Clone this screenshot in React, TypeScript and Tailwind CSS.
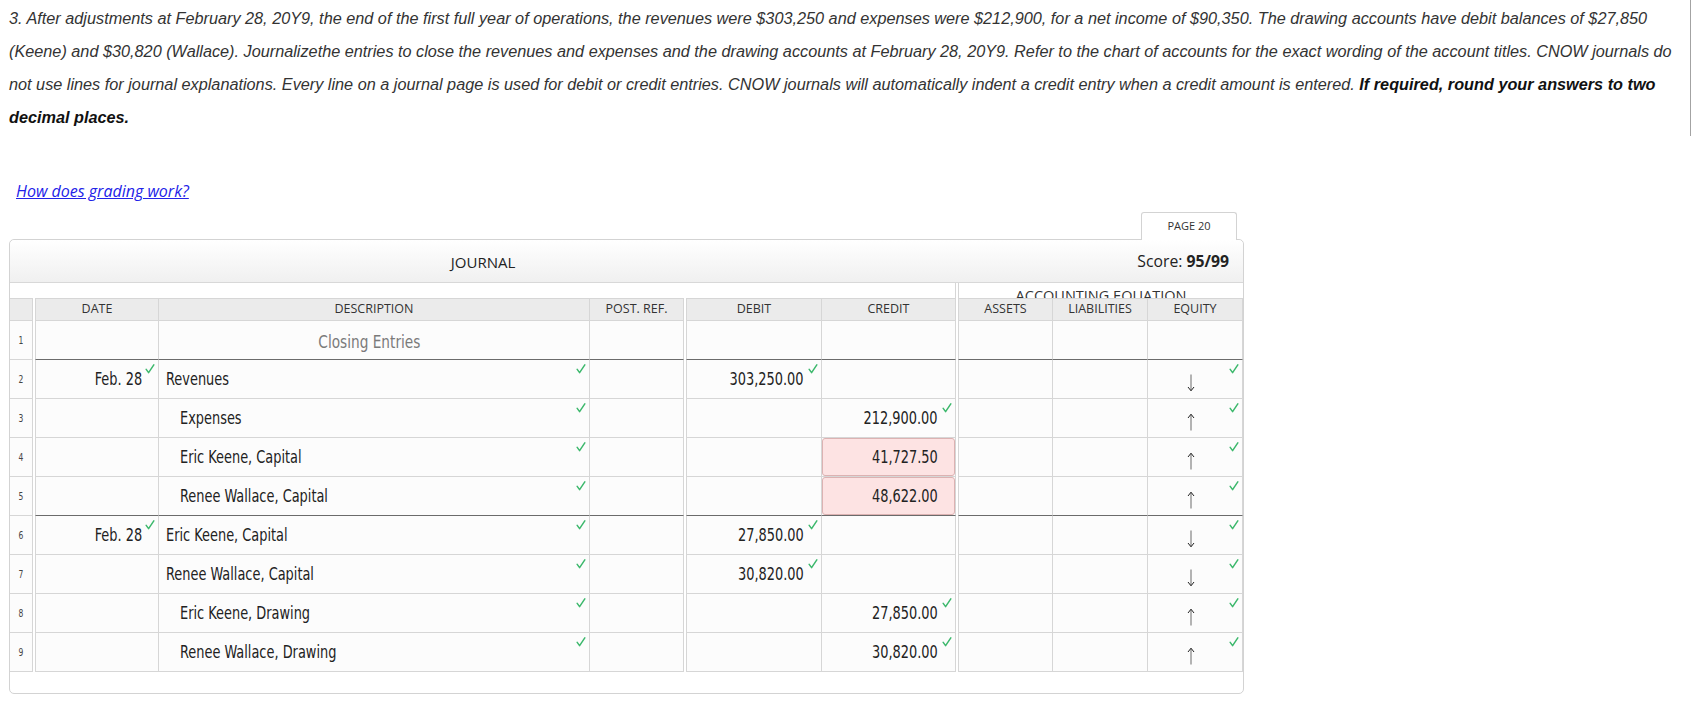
import React from 'react';

type Row = {
  n: number;
  date?: string;
  desc: string;
  placeholder?: boolean;
  indent?: boolean;
  debit?: string;
  credit?: string;
  wrong?: boolean;
  eq?: 'up' | 'down';
  sep?: boolean;
};

const rows: Row[] = [
  { n: 1, desc: 'Closing Entries', placeholder: true, sep: true },
  { n: 2, date: 'Feb. 28', desc: 'Revenues', debit: '303,250.00', eq: 'down' },
  { n: 3, desc: 'Expenses', indent: true, credit: '212,900.00', eq: 'up' },
  { n: 4, desc: 'Eric Keene, Capital', indent: true, credit: '41,727.50', wrong: true, eq: 'up' },
  { n: 5, desc: 'Renee Wallace, Capital', indent: true, credit: '48,622.00', wrong: true, eq: 'up', sep: true },
  { n: 6, date: 'Feb. 28', desc: 'Eric Keene, Capital', debit: '27,850.00', eq: 'down' },
  { n: 7, desc: 'Renee Wallace, Capital', debit: '30,820.00', eq: 'down' },
  { n: 8, desc: 'Eric Keene, Drawing', indent: true, credit: '27,850.00', eq: 'up' },
  { n: 9, desc: 'Renee Wallace, Drawing', indent: true, credit: '30,820.00', eq: 'up' },
];

const Check = () => (
  <svg width="10" height="10" viewBox="0 0 10 10" className="absolute top-[4px] right-[3px]">
    <path d="M1.2 5.4 L3.6 8.6 L8.8 0.8" fill="none" stroke="#3cb86c" strokeWidth="1.5" strokeLinecap="round" strokeLinejoin="round" />
  </svg>
);

// thin arrow like the Arial glyph in the equity column
const Arrow = ({ dir }: { dir: 'up' | 'down' }) => (
  <svg width="8" height="18" viewBox="0 0 8 18" className={dir === 'down' ? 'rotate-180' : ''}>
    <path d="M4 1.5 V17.5" stroke="#6a6a6a" strokeWidth="1" />
    <path d="M1 5 L4 1.2 L7 5" fill="none" stroke="#222" strokeWidth="1" />
  </svg>
);

const narrow = "font-['DejaVu_Sans_Condensed','DejaVu_Sans',sans-serif]";

// squeezed text to get the narrow look of the journal font
const Sq: React.FC<{ children: React.ReactNode; origin: string }> = ({ children, origin }) => (
  <span className={`inline-block whitespace-nowrap scale-x-[0.845] ${origin}`}>{children}</span>
);

const JournalRow: React.FC<{ row: Row }> = ({ row }) => {
  const b = row.sep ? 'border-b-[#6b6b6b]' : 'border-b-[#d6d6d6]';
  const cell = `relative h-[39px] border-b ${b} border-r border-r-[#d6d6d6] bg-[#fcfcfc] flex items-center`;
  return (
    <div className={`flex text-[17px] text-[#222] ${narrow}`}>
      <div className="w-[23px] h-[39px] border-b border-r border-[#d6d6d6] bg-[#fcfcfc] flex items-center justify-center text-[10px] text-[#444]">
        <Sq origin="origin-center">{row.n}</Sq>
      </div>
      <div className="w-[2px]" />
      <div className={`w-[124px] border-l border-l-[#d6d6d6] justify-end pr-[16px] pt-[2px] ${cell}`}>
        {row.date && <Sq origin="origin-right">{row.date}</Sq>}
        {row.date && <Check />}
      </div>
      <div
        className={`w-[431px] pt-[2px] ${cell} ${
          row.placeholder ? 'justify-center text-[18px] text-[#7a7a7a] pr-[10px]' : row.indent ? 'pl-[21px]' : 'pl-[7px]'
        }`}
      >
        <Sq origin={row.placeholder ? 'origin-center' : 'origin-left'}>{row.desc}</Sq>
        {!row.placeholder && <Check />}
      </div>
      <div className={`w-[94px] ${cell}`} />
      <div className="w-[2px]" />
      <div className={`w-[136px] border-l border-l-[#d6d6d6] justify-end pr-[17px] pt-[2px] ${cell}`}>
        {row.debit && <Sq origin="origin-right">{row.debit}</Sq>}
        {row.debit && <Check />}
      </div>
      <div className={`w-[134px] ${row.wrong ? '' : 'justify-end pr-[17px] pt-[2px]'} ${cell}`}>
        {row.wrong ? (
          <div className="h-full w-full rounded-[3px] border border-[#dcb2b2] bg-[#fde3e3] flex items-center justify-end pr-[16px] pt-[2px]">
            <Sq origin="origin-right">{row.credit}</Sq>
          </div>
        ) : (
          <>
            {row.credit && <Sq origin="origin-right">{row.credit}</Sq>}
            {row.credit && <Check />}
          </>
        )}
      </div>
      <div className="w-[2px]" />
      <div className={`w-[95px] border-l border-l-[#d6d6d6] ${cell}`} />
      <div className={`w-[95px] ${cell}`} />
      <div className={`w-[95px] pl-[39px] pt-[8px] ${cell}`}>
        {row.eq && <Arrow dir={row.eq} />}
        {row.eq && <Check />}
      </div>
    </div>
  );
};

const HeaderRow = () => {
  const h = 'h-[23px] border-t border-b border-r border-[#d6d6d6] bg-[#ebebeb] flex items-center justify-center';
  return (
    <div className="flex font-['Open_Sans',sans-serif] text-[12.5px] text-[#333] relative z-10">
      <div className={`w-[23px] ${h}`} />
      <div className="w-[2px]" />
      <div className={`w-[124px] border-l ${h}`}>DATE</div>
      <div className={`w-[431px] ${h}`}>DESCRIPTION</div>
      <div className={`w-[94px] ${h}`}>POST. REF.</div>
      <div className="w-[2px]" />
      <div className={`w-[136px] border-l ${h}`}>DEBIT</div>
      <div className={`w-[134px] ${h}`}>CREDIT</div>
      <div className="w-[2px]" />
      <div className={`w-[95px] border-l ${h}`}>ASSETS</div>
      <div className={`w-[95px] ${h}`}>LIABILITIES</div>
      <div className={`w-[95px] ${h}`}>EQUITY</div>
    </div>
  );
};

export default function App() {
  return (
    <div className="w-[1703px] h-[720px] bg-white text-[#333] overflow-hidden">
      <div className="w-[1691px] border-r border-[#a3a3a3] pl-[9px] pr-[10px] pt-[2px] pb-[2px]">
        <p className="font-['Liberation_Sans',Arial,sans-serif] italic text-[16.25px] leading-[33px] text-[#333]">
          3. After adjustments at February 28, 20Y9, the end of the first full year of operations, the revenues were
          $303,250 and expenses were $212,900, for a net income of $90,350. The drawing accounts have debit balances of
          $27,850 (Keene) and $30,820 (Wallace). Journalizethe entries to close the revenues and expenses and the drawing
          accounts at February 28, 20Y9. Refer to the chart of accounts for the exact wording of the account titles. CNOW
          journals do not use lines for journal explanations. Every line on a journal page is used for debit or credit
          entries. CNOW journals will automatically indent a credit entry when a credit amount is entered.{' '}
          <b className="text-[#111]">If required, round your answers to two decimal places.</b>
        </p>
      </div>

      <div className="mt-[44px] pl-[16px] h-[22px] leading-[22px]">
        <a href="#" className="font-['Open_Sans',sans-serif] italic text-[16px] text-[#2222e8] underline">
          How does grading work?
        </a>
      </div>

      <div className="w-[1235px] ml-[9px] mt-[10px] flex justify-end pr-[7px]">
        <div className="relative z-10 -mb-[1px] w-[96px] h-[28px] border border-b-0 border-[#d3d3d3] rounded-t-[3px] bg-white flex items-center justify-center font-['Open_Sans',sans-serif] text-[11px] text-[#333]">
          PAGE 20
        </div>
      </div>

      <div className="ml-[9px] w-[1235px] border border-[#d3d3d3] rounded-[5px] pb-[21px] bg-white">
        <div className="flex h-[43px] border-b border-[#d8d8d8] rounded-t-[5px] bg-linear-to-b from-white to-[#f0f0f0] font-['Open_Sans',sans-serif] text-[15px] text-[#222]">
          <div className="w-[946px] flex items-center justify-center pt-[2px]">JOURNAL</div>
          <div className="flex-1 flex items-center justify-end pr-[14px] pt-[2px] text-[15.75px]">
            Score:&nbsp;<b className="font-bold">95/99</b>
          </div>
        </div>

        <div className="flex h-[15px]">
          <div className="w-[946px] border-r border-[#d6d6d6]" />
          <div className="w-[2px]" />
          <div className="w-[285px] border-l border-[#d6d6d6] overflow-hidden flex justify-center">
            <span className="font-['Open_Sans',sans-serif] text-[14.5px] leading-none text-[#333] pt-[6px] whitespace-nowrap">
              ACCOUNTING EQUATION
            </span>
          </div>
        </div>

        <HeaderRow />
        {rows.map((r) => (
          <JournalRow key={r.n} row={r} />
        ))}
      </div>
    </div>
  );
}
